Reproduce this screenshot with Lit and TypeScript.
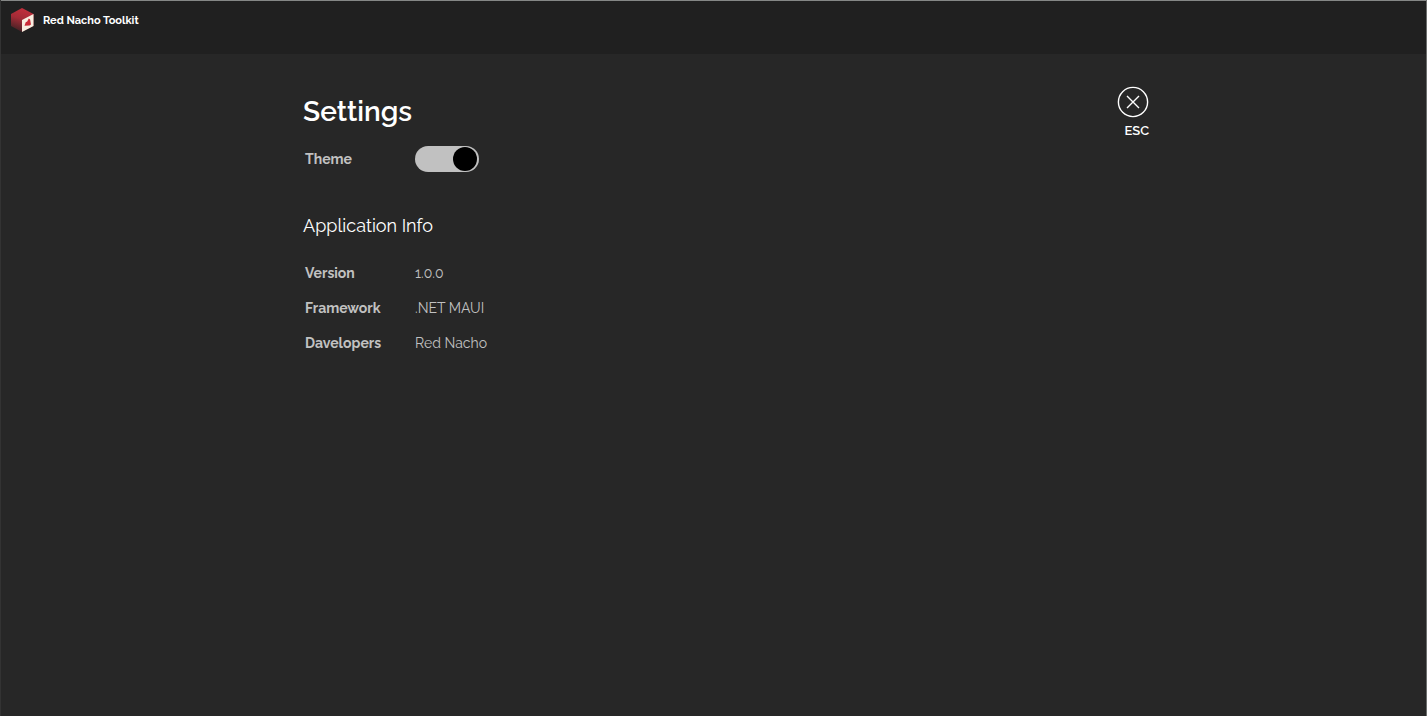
import { LitElement, html, css } from "lit";
import { customElement, state } from "lit/decorators.js";

@customElement("app-root")
export class AppRoot extends LitElement {
  @state() private dark = true;

  static styles = css`
    :host {
      display: flex;
      flex-direction: column;
      box-sizing: border-box;
      min-height: 100vh;
      background: #272727;
      color: #fff;
      font-family: Raleway, Lato, sans-serif;
      border-left: 1px solid #333;
      border-right: 1px solid #6c6e6d;
    }
    .titlebar {
      display: flex;
      align-items: flex-start;
      gap: 9px;
      box-sizing: border-box;
      height: 54px;
      padding: 7px 9px;
      background: #202020;
      border-top: 1px solid #858786;
      font-size: 11px;
      line-height: 25px;
      font-weight: 700;
    }
    .logo {
      display: block;
      width: 24px;
      height: 24px;
    }
    .page {
      display: grid;
      grid-template-columns: minmax(16px, 12fr) minmax(0, 846px) minmax(16px, 11fr);
      padding-top: 32px;
    }
    .content {
      grid-column: 2;
      display: flex;
      justify-content: space-between;
      align-items: flex-start;
    }
    h1 {
      margin: 8px 0 0;
      font-size: 28px;
      line-height: 36px;
      font-weight: 600;
    }
    h2 {
      margin: 40px 0 21px;
      font-size: 18px;
      line-height: 28px;
      font-weight: 400;
    }
    .row {
      display: grid;
      grid-template-columns: 110px auto;
      align-items: center;
      padding-left: 2px;
      color: #c1c1c1;
      font-size: 14px;
      line-height: 24px;
    }
    .theme {
      margin-top: 16px;
    }
    .label {
      font-weight: 700;
    }
    .info {
      display: grid;
      gap: 11px;
      margin: 0;
    }
    .info dd {
      margin: 0;
    }
    .switch {
      appearance: none;
      display: flex;
      justify-content: flex-start;
      box-sizing: border-box;
      width: 64px;
      height: 26px;
      margin: 0;
      padding: 1px 2px;
      border-radius: 13px;
      background: #c1c1c1;
      cursor: pointer;
    }
    .switch::before {
      content: "";
      width: 24px;
      height: 24px;
      border-radius: 50%;
      background: #000;
    }
    .switch:checked {
      justify-content: flex-end;
    }
    .close {
      display: flex;
      flex-direction: column;
      align-items: flex-end;
      gap: 3px;
      margin: 0;
      padding: 0;
      border: 0;
      background: none;
      color: inherit;
      font: 600 13px/20px Raleway, Lato, sans-serif;
      cursor: pointer;
    }
    .close svg {
      display: block;
      width: 32px;
      height: 32px;
    }
  `;

  render() {
    return html`
      <header class="titlebar">
        <svg class="logo" viewBox="0 0 24 24" aria-hidden="true">
          <defs>
            <linearGradient id="top" x1="0.6" y1="0" x2="0.3" y2="1">
              <stop offset="0" stop-color="#c42f3c" />
              <stop offset="0.45" stop-color="#a32b36" />
              <stop offset="1" stop-color="#3d2023" />
            </linearGradient>
          </defs>
          <path d="M12 0 23.5 6v12L12 24 1 18V6Z" fill="url(#top)" />
          <path d="M12 12 23.5 6v12L12 24Z" fill="#f8eee0" />
          <path d="m14.5 17.8 1.2-3.6 1.5-.6 1.6-3.2 1.3 1.2.9 4.8-1.4 1Z" fill="#cb2b38" />
        </svg>
        <span>Red Nacho Toolkit</span>
      </header>
      <main class="page">
        <div class="content">
          <div>
            <h1>Settings</h1>
            <div class="row theme">
              <label class="label" for="theme">Theme</label>
              <input
                class="switch"
                id="theme"
                type="checkbox"
                role="switch"
                .checked=${this.dark}
                @change=${(e: Event) => (this.dark = (e.target as HTMLInputElement).checked)}
              />
            </div>
            <h2>Application Info</h2>
            <dl class="info">
              <div class="row"><dt class="label">Version</dt><dd>1.0.0</dd></div>
              <div class="row"><dt class="label">Framework</dt><dd>.NET MAUI</dd></div>
              <div class="row"><dt class="label">Davelopers</dt><dd>Red Nacho</dd></div>
            </dl>
          </div>
          <button class="close" type="button">
            <svg viewBox="0 0 32 32" fill="none" stroke="#fff" stroke-width="1.4" aria-hidden="true">
              <circle cx="16" cy="16" r="14.6" />
              <path d="m10 10 12 12M22 10 10 22" />
            </svg>
            <span>ESC</span>
          </button>
        </div>
      </main>
    `;
  }
}
